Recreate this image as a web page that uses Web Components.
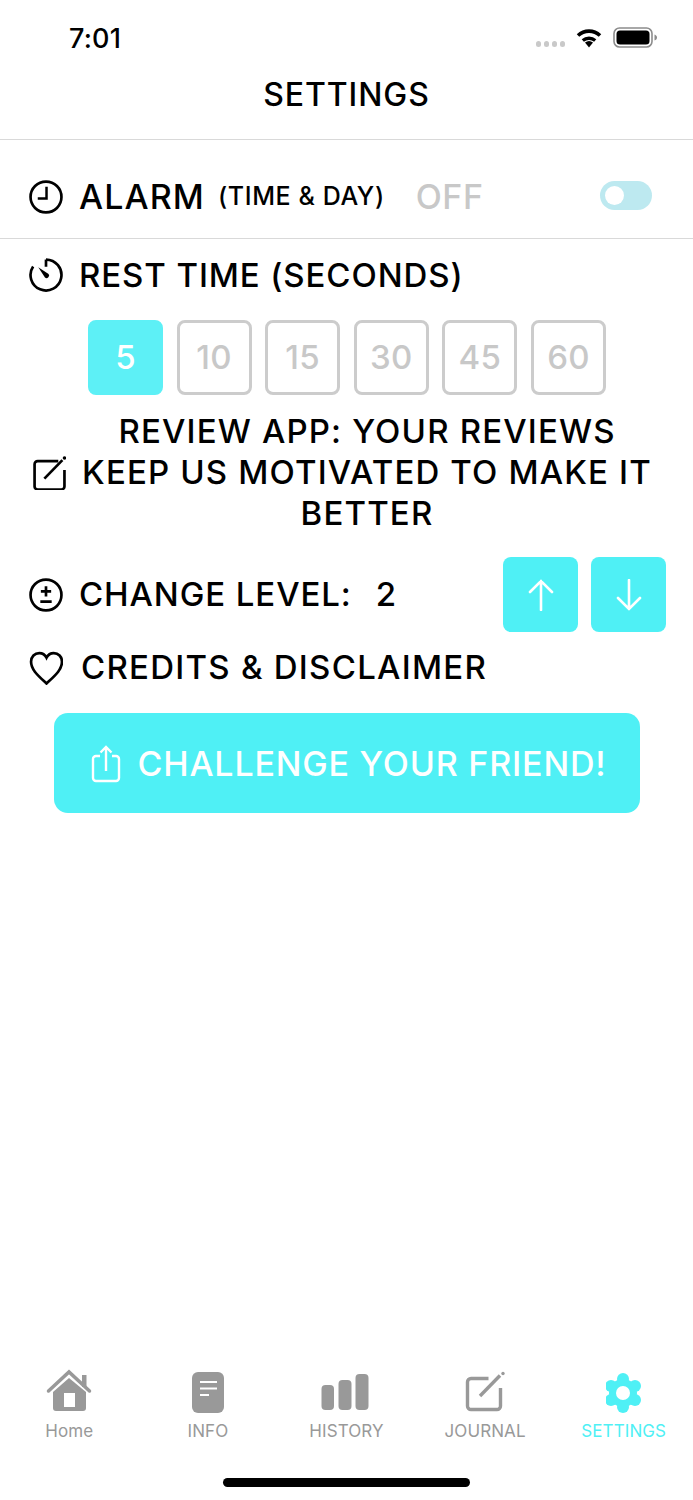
<!DOCTYPE html>
<html>
<head>
<meta charset="utf-8">
<style>
html, body { margin: 0; padding: 0; background: #fff; }
body { width: 693px; height: 1500px; font-family: "Inter", "Liberation Sans", sans-serif; color: #000; }
settings-page { display: flex; }
</style>
</head>
<body>
<settings-page></settings-page>

<script>
const ICONS = {
  clock: `<circle cx="16" cy="16" r="15" fill="none" stroke="currentColor" stroke-width="2.6"/><path d="M16.500 6v11.500H8" fill="none" stroke="currentColor" stroke-width="2.4"/>`,
  timer: `<path d="M16 1a15 15 0 1 1-12.500 6.700" fill="none" stroke="currentColor" stroke-width="2.6"/><path d="M16 1v7" fill="none" stroke="currentColor" stroke-width="2.6"/><path d="M8.500 8.500l10 6.500a2.500 2.500 0 0 1-3.500 3.500z" fill="currentColor"/>`,
  pen: `<path d="M25 4.500H5a3 3 0 0 0-3 3V29a3 3 0 0 0 3 3h23a3 3 0 0 0 3-3V13" fill="none" stroke="currentColor" stroke-width="2.6"/><path d="M11.500 21.500L29 3.500" fill="none" stroke="currentColor" stroke-width="2.6"/><circle cx="31" cy="1.500" r="1.700" fill="currentColor"/>`,
  plusminus: `<circle cx="16" cy="16" r="15" fill="none" stroke="currentColor" stroke-width="2.6"/><path d="M16 7.500v10M11 12.500h10M10.500 22.500h11" fill="none" stroke="currentColor" stroke-width="2.600"/>`,
  heart: `<path d="M16.500 31C9 24 1.500 18 1.500 10 1.500 5 5 1.500 9.500 1.500c3 0 5.500 1.500 7 4.500 1.500-3 4-4.500 7-4.500 4.500 0 8 3.500 8 8.500 0 8-7.500 14-15 21z" fill="none" stroke="currentColor" stroke-width="2.600"/>`
};

class SfIcon extends HTMLElement {
  constructor() {
    super();
    const name = this.getAttribute('name');
    const w = this.getAttribute('size') || 34;
    this.attachShadow({ mode: 'open' }).innerHTML = `
      <style>:host{display:block;flex:none;line-height:0}</style>
      <svg width="${w}" height="${w}" viewBox="-0.5 -0.5 33 33">${ICONS[name]}</svg>`;
  }
}
customElements.define('sf-icon', SfIcon);

const statusTpl = document.createElement('template');
statusTpl.innerHTML = `
<style>
:host{display:flex;align-items:center;height:75px;box-sizing:border-box;padding:0 36px 0 69px}
.time{font:500 27px "Inter","Liberation Sans",sans-serif;letter-spacing:.2px;flex:1;padding-top:2px}
.right{display:flex;align-items:center}
.dots{display:flex;gap:2.500px;margin:13px 11px 0 0}
.dots i{width:5.500px;height:5.500px;border-radius:50%;background:#c9c9c9}
.batt{margin-left:11px}
</style>
<span class="time">7:01</span>
<div class="right">
  <div class="dots"><i></i><i></i><i></i><i></i></div>
  <svg width="26" height="21" viewBox="0 0 26 21" fill="none" stroke="#000"><path d="M2 8.500a16 16 0 0 1 22 0" stroke-width="3.600"/><path d="M6.800 13.500a9.500 9.500 0 0 1 12.400 0" stroke-width="3.400"/><path d="M13 20.500l-4-5a6.500 6.500 0 0 1 8 0z" fill="#000" stroke="none"/></svg>
  <svg class="batt" width="44" height="21" viewBox="0 0 44 21"><rect x="1" y="1" width="38" height="19" rx="5.500" fill="none" stroke="#8c8c8c" stroke-width="1.600"/><rect x="3.500" y="3.500" width="33" height="14" rx="3.500" fill="#000"/><path d="M41.500 7.500c1.500.5 2.500 1.500 2.500 3s-1 2.500-2.500 3z" fill="#8c8c8c"/></svg>
</div>`;
class StatusBar extends HTMLElement {
  constructor() {
    super();
    this.attachShadow({ mode: 'open' }).appendChild(statusTpl.content.cloneNode(true));
  }
}
customElements.define('status-bar', StatusBar);

const navTpl = document.createElement('template');
navTpl.innerHTML = `
<style>
:host{display:flex;justify-content:center;align-items:center;height:64px;border-bottom:1px solid #d9d9d9}
span{font:500 32px "Inter",sans-serif;letter-spacing:.9px;padding-bottom:27px;padding-top:1px}
</style>
<span><slot></slot></span>`;
class NavHeader extends HTMLElement {
  constructor() {
    super();
    this.attachShadow({ mode: 'open' }).appendChild(navTpl.content.cloneNode(true));
  }
}
customElements.define('nav-header', NavHeader);

const rowTpl = document.createElement('template');
rowTpl.innerHTML = `
<style>
:host{display:flex;align-items:center;gap:16px;padding-left:29px;font:500 33px/41px "Inter",sans-serif;letter-spacing:.9px;color:#000}
</style>
<slot name="icon"></slot><slot></slot>`;
class SettingRow extends HTMLElement {
  constructor() {
    super();
    this.attachShadow({ mode: 'open' }).appendChild(rowTpl.content.cloneNode(true));
  }
}
customElements.define('setting-row', SettingRow);

const toggleTpl = document.createElement('template');
toggleTpl.innerHTML = `
<style>
:host{display:block;width:52px;height:29px;border-radius:15px;background:#bde9f0;position:relative;flex:none}
i{position:absolute;left:5px;top:5px;width:19px;height:19px;border-radius:50%;background:#fff}
</style><i></i>`;
class ToggleSwitch extends HTMLElement {
  constructor() {
    super();
    this.attachShadow({ mode: 'open' }).appendChild(toggleTpl.content.cloneNode(true));
  }
}
customElements.define('toggle-switch', ToggleSwitch);

const boxTpl = document.createElement('template');
boxTpl.innerHTML = `
<style>
:host{display:flex;align-items:center;justify-content:center;box-sizing:border-box;width:75px;height:75px;border-radius:8px;border:3px solid #cccccc;color:#c8c8c8;font:500 33px "Inter",sans-serif;letter-spacing:.3px;padding-bottom:2px;flex:none}
:host([active]){background:#5df0f6;border-color:#5df0f6;color:#fff}
:host([solid]){background:#4ff0f5;border:0;color:#fff;padding:0}
</style><slot></slot>`;
class OptionBox extends HTMLElement {
  constructor() {
    super();
    this.attachShadow({ mode: 'open' }).appendChild(boxTpl.content.cloneNode(true));
  }
}
customElements.define('option-box', OptionBox);

const shareBtnTpl = document.createElement('template');
shareBtnTpl.innerHTML = `
<style>
:host{display:flex;align-items:center;justify-content:center;gap:17px;margin:0 53px 0 54px;padding-left:3px;height:100px;border-radius:14px;background:#4ff0f5;color:#fff;font:500 34px "Inter",sans-serif;letter-spacing:.8px}
svg{flex:none;margin-top:2px}
</style>
<svg width="30" height="38" viewBox="0 0 30 38" fill="none" stroke="#fff" stroke-width="2.400"><path d="M9 11H5a3 3 0 0 0-3 3v19a3 3 0 0 0 3 3h20a3 3 0 0 0 3-3V14a3 3 0 0 0-3-3h-4M15 2v24M9.500 7.500L15 2l5.500 5.500"/></svg>
<slot></slot>`;
class ShareButton extends HTMLElement {
  constructor() {
    super();
    this.attachShadow({ mode: 'open' }).appendChild(shareBtnTpl.content.cloneNode(true));
  }
}
customElements.define('share-button', ShareButton);

const TAB_ICONS = {
  home: `<svg width="46" height="46" viewBox="0 0 46 46"><path d="M7 23L23 9l17 14v16a3 3 0 0 1-3 3H10a3 3 0 0 1-3-3z" fill="#999"/><rect x="18" y="24" width="11" height="14" fill="#fff"/><rect x="36" y="6" width="4.500" height="12" fill="#999"/><path d="M2.500 22L23 3l20.500 19" fill="none" stroke="#999" stroke-width="3.500" stroke-linecap="round"/></svg>`,
  info: `<svg width="32" height="46" viewBox="0 0 32 46"><rect x="0" y="3" width="32" height="41" rx="6" fill="#999"/><path d="M8 13h17M8 19.500h17M8 26h9" stroke="#fff" stroke-width="2"/></svg>`,
  history: `<svg width="50" height="46" viewBox="0 0 50 46"><rect x="0.500" y="16" width="12.500" height="25" rx="4" fill="#999"/><rect x="17.500" y="11" width="13" height="30" rx="4" fill="#999"/><rect x="34.500" y="5" width="13" height="36" rx="4" fill="#999"/></svg>`,
  journal: `<svg width="40" height="46" viewBox="0 0 40 46"><path d="M23.500 9.500H6a3.500 3.500 0 0 0-3.500 3.500v24A3.500 3.500 0 0 0 6 40.500h26a3.500 3.500 0 0 0 3.500-3.500V19" fill="none" stroke="#999" stroke-width="3.400"/><path d="M15 27l20-20.500" fill="none" stroke="#999" stroke-width="3.400"/><circle cx="38" cy="4.500" r="1.700" fill="#999"/></svg>`,
  settings: `<svg width="36" height="46" viewBox="1 0 36 46" fill="#4ff0f5"><circle cx="18" cy="24" r="14"/><circle cx="18" cy="10" r="6"/><circle cx="18" cy="38" r="6"/><circle cx="6" cy="17" r="6"/><circle cx="30" cy="17" r="6"/><circle cx="6" cy="31" r="6"/><circle cx="30" cy="31" r="6"/><circle cx="18" cy="24" r="7" fill="#fff"/></svg>`
};

const tabTpl = document.createElement('template');
tabTpl.innerHTML = `
<style>
:host{display:flex;flex-direction:column;align-items:center;flex:1 1 0;color:#999}
:host([active]){color:#4ff0f5}
.ic{height:54px;display:flex;align-items:center;justify-content:center}
.lb{font:400 17px/20px "Inter","Liberation Sans",sans-serif;letter-spacing:.1px;margin-top:2px}
</style>
<div class="ic"></div><div class="lb"><slot></slot></div>`;
class TabItem extends HTMLElement {
  constructor() {
    super();
    this.attachShadow({ mode: 'open' }).appendChild(tabTpl.content.cloneNode(true));
    this.shadowRoot.querySelector('.ic').innerHTML = TAB_ICONS[this.getAttribute('icon')];
  }
}
customElements.define('tab-item', TabItem);

const tabsTpl = document.createElement('template');
tabsTpl.innerHTML = `
<style>
:host{display:block}
.tabs{display:flex;height:113px;box-sizing:border-box}
.home{width:247px;height:9px;border-radius:5px;background:#000;margin:0 auto}
</style>
<div class="tabs"><slot></slot></div>
<div class="home"></div>`;
class TabBar extends HTMLElement {
  constructor() {
    super();
    this.attachShadow({ mode: 'open' }).appendChild(tabsTpl.content.cloneNode(true));
  }
}
customElements.define('tab-bar', TabBar);

const pageTpl = document.createElement('template');
pageTpl.innerHTML = `
<style>
:host{display:flex;flex-direction:column;width:693px;height:1500px;overflow:hidden}
.alarm{height:83px;padding-top:15px;border-bottom:1px solid #d9d9d9}
.alarm .big{font-size:34px;letter-spacing:1.1px}
.small{font-size:25px;letter-spacing:.6px;margin-left:-3px}
.off{font-size:34px;letter-spacing:.6px;color:#c8c8c8;margin-left:15px}
.grow{flex:1}
.sw{margin-right:41px;position:relative;top:-1px}
.rest{height:72px}
.opts{display:flex;justify-content:center;gap:13.600px;margin:9px 0 0;padding-left:1px}
.review{margin-top:16px;padding-left:32px;height:123px;gap:11px;letter-spacing:1.15px}
.review .txt{width:580px;text-align:center}
.level{margin-top:23px;height:75px;padding-right:27px}
.level .num{margin-left:24px}
.arrows{display:flex;gap:13px}
.credits{margin-top:15px;height:41px;gap:18px;letter-spacing:1.25px}
share-button{margin-top:25px}
.fill{flex:1}
</style>
<status-bar></status-bar>
<nav-header>SETTINGS</nav-header>
<setting-row class="alarm">
  <sf-icon slot="icon" name="clock"></sf-icon>
  <span class="big">ALARM</span><span class="small">(TIME &amp; DAY)</span><span class="off">OFF</span>
  <span class="grow"></span><toggle-switch class="sw"></toggle-switch>
</setting-row>
<setting-row class="rest"><sf-icon slot="icon" name="timer"></sf-icon><span>REST TIME (SECONDS)</span></setting-row>
<div class="opts">
  <option-box active>5</option-box><option-box>10</option-box><option-box>15</option-box>
  <option-box>30</option-box><option-box>45</option-box><option-box>60</option-box>
</div>
<setting-row class="review"><sf-icon slot="icon" name="pen"></sf-icon><span class="txt">REVIEW APP: YOUR REVIEWS KEEP US MOTIVATED TO MAKE IT BETTER</span></setting-row>
<setting-row class="level">
  <sf-icon slot="icon" name="plusminus"></sf-icon>
  <span>CHANGE LEVEL:<span class="num">2</span></span><span class="grow"></span>
  <div class="arrows">
    <option-box solid><svg width="28" height="32" viewBox="0 0 28 32" fill="none" stroke="#fff" stroke-width="2.600" stroke-linecap="round"><path d="M14 31V2M3 13L14 2l11 11"/></svg></option-box>
    <option-box solid><svg width="28" height="32" viewBox="0 0 28 32" fill="none" stroke="#fff" stroke-width="2.600" stroke-linecap="round"><path d="M14 1v29M3 19l11 11 11-11"/></svg></option-box>
  </div>
</setting-row>
<setting-row class="credits"><sf-icon slot="icon" name="heart"></sf-icon><span>CREDITS &amp; DISCLAIMER</span></setting-row>
<share-button>CHALLENGE YOUR FRIEND!</share-button>
<div class="fill"></div>
<tab-bar>
  <tab-item icon="home">Home</tab-item>
  <tab-item icon="info">INFO</tab-item>
  <tab-item icon="history">HISTORY</tab-item>
  <tab-item icon="journal">JOURNAL</tab-item>
  <tab-item icon="settings" active>SETTINGS</tab-item>
</tab-bar>
<div style="height:13px"></div>`;
class SettingsPage extends HTMLElement {
  constructor() {
    super();
    this.attachShadow({ mode: 'open' }).appendChild(pageTpl.content.cloneNode(true));
  }
}
customElements.define('settings-page', SettingsPage);
</script>
</body>
</html>
